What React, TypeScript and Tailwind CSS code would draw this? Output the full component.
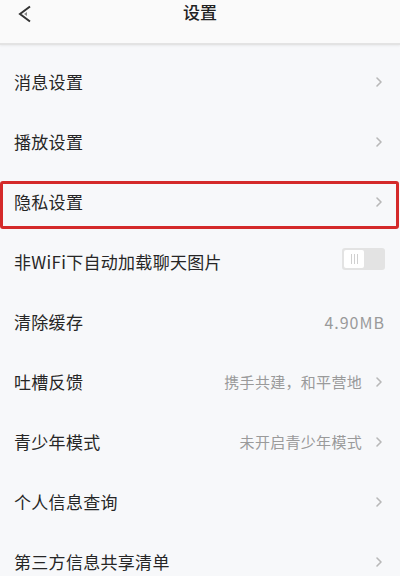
import React from "react";

const Chevron = () => (
  <svg width="12" height="12" viewBox="0 0 12 12" className="shrink-0">
    <path d="M4 2 L8 6 L4 10" fill="none" stroke="#b8b8b8" strokeWidth="1.6" strokeLinecap="round" strokeLinejoin="round" />
  </svg>
);

type Row = { label: string; right?: string; chevron?: boolean; toggle?: boolean; highlight?: boolean; wide?: boolean };

const rows: Row[] = [
  { label: "消息设置", chevron: true },
  { label: "播放设置", chevron: true },
  { label: "隐私设置", chevron: true, highlight: true },
  { label: "非WiFi下自动加载聊天图片", toggle: true },
  { label: "清除缓存", right: "4.90MB", wide: true },
  { label: "吐槽反馈", right: "携手共建，和平营地", chevron: true },
  { label: "青少年模式", right: "未开启青少年模式", chevron: true },
  { label: "个人信息查询", chevron: true },
  { label: "第三方信息共享清单", chevron: true },
];

export default function App() {
  return (
    <div
      className="w-[400px] h-[576px] overflow-hidden bg-[#f7f8fa] text-[#262626]"
      style={{ fontFamily: '"Noto Sans CJK SC", "Noto Sans", sans-serif' }}
    >
      <div className="relative h-[45px] bg-[#fafafa] border-b-2 border-[#e3e3e3] shadow-[0_1px_2px_rgba(0,0,0,0.06)] flex items-start justify-center">
        <svg width="16" height="18" viewBox="0 0 16 18" className="absolute left-[17px] top-[5px]">
          <path d="M13 1.5 L3 9 L13 16.5" fill="none" stroke="#333" strokeWidth="2" strokeLinejoin="miter" />
          <path d="M7 9 L10 7 L10 11 Z" fill="#888" />
        </svg>
        <span className="text-[17px] leading-[24px] font-medium text-[#222]">设置</span>
      </div>
      <div className="pt-[7px]">
        {rows.map((r) => (
          <div key={r.label} className="relative h-[60px] flex items-center pl-[14px] pr-[15px]">
            {r.highlight && (
              <div className="absolute left-0 right-[1px] top-[9px] h-[48px] border-[3px] border-[#d42a2a] rounded-[3px]" />
            )}
            <span className="text-[17px] leading-[24px] tracking-[0.3px]">{r.label}</span>
            <div className="ml-auto flex items-center gap-[11px]">
              {r.right && (
                <span
                  className={
                    r.wide
                      ? "text-[16px] text-[#9a9a9a] tracking-[1px]"
                      : "text-[15px] text-[#9a9a9a] tracking-[0.3px]"
                  }
                >
                  {r.right}
                </span>
              )}
              {r.chevron && <Chevron />}
              {r.toggle && (
                <div className="w-[43px] h-[22px] -mt-[6px] rounded-[3px] bg-[#e3e3e3] p-[2px] flex">
                  <div className="w-[20px] h-[18px] rounded-[2px] bg-white flex items-center justify-center gap-[2px]">
                    <span className="w-[1px] h-[10px] bg-[#d0d0d0]" />
                    <span className="w-[1px] h-[10px] bg-[#d0d0d0]" />
                    <span className="w-[1px] h-[10px] bg-[#d0d0d0]" />
                  </div>
                </div>
              )}
            </div>
          </div>
        ))}
      </div>
    </div>
  );
}
